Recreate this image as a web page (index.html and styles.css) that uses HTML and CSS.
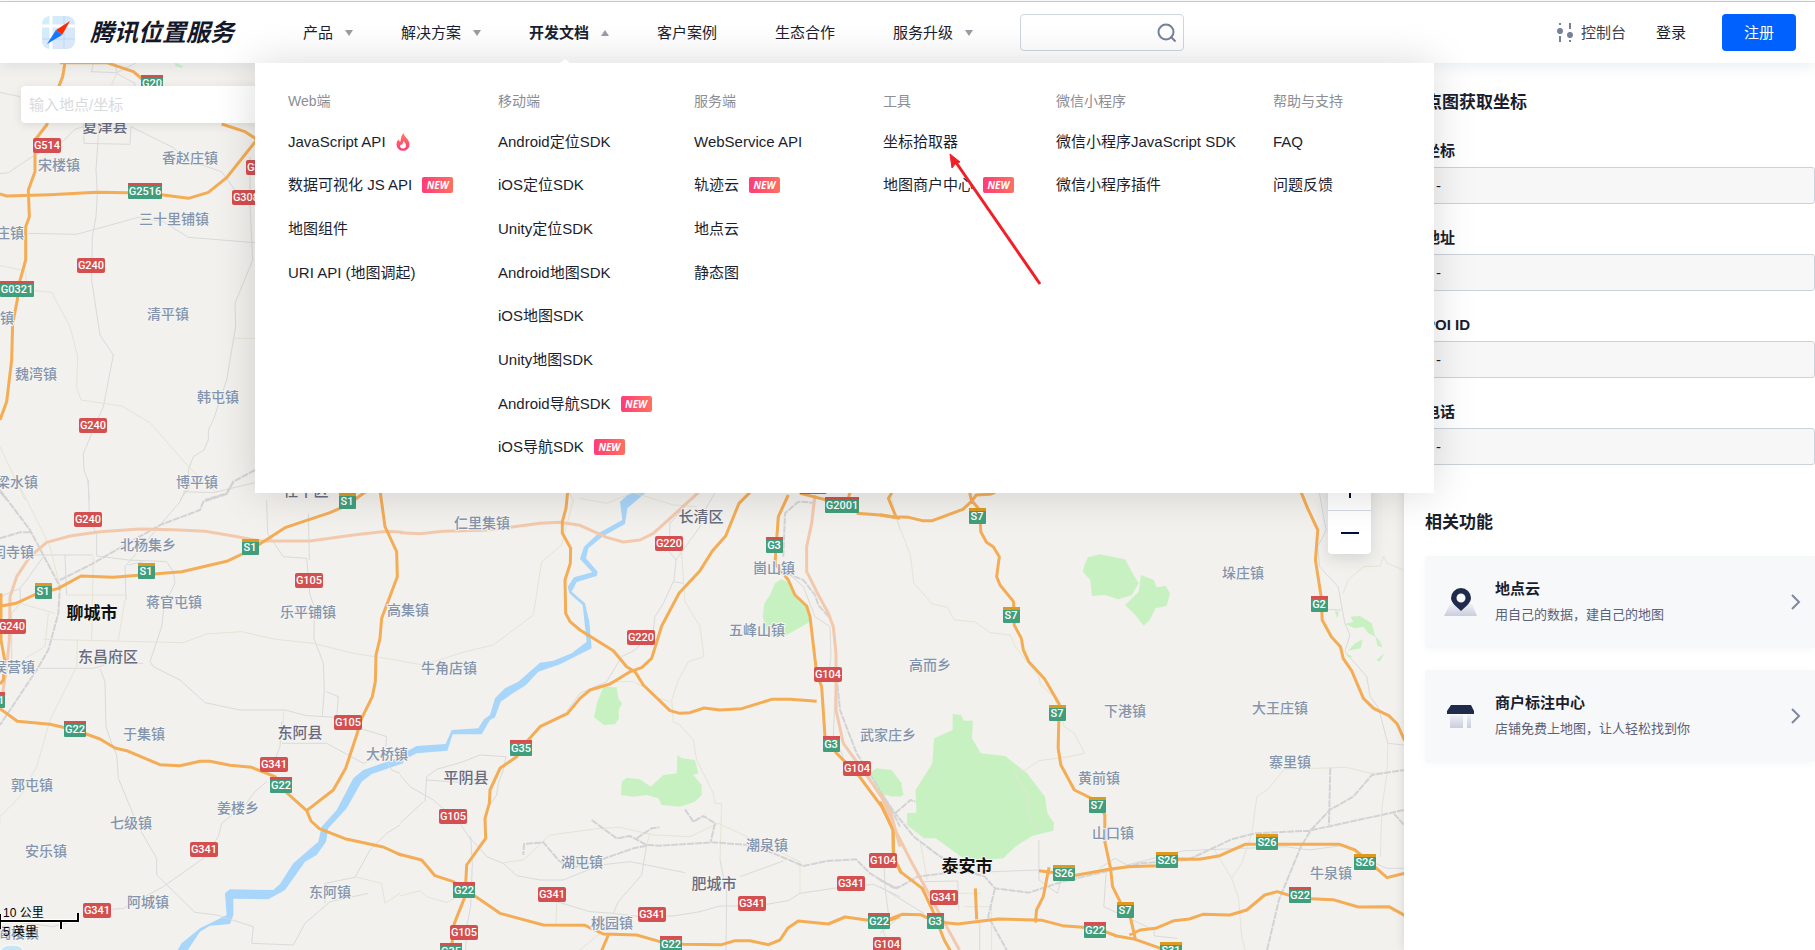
FILE: index.html
```html
<!DOCTYPE html>
<html lang="zh-CN">
<head>
<meta charset="utf-8">
<title>腾讯位置服务 - 坐标拾取器</title>
<link rel="stylesheet" href="styles.css">
</head>
<body>
<header class="header">
  <a class="brand" href="#">
    <svg class="brand-mark" width="33" height="33" viewBox="0 0 33 33">
      <defs>
        <clipPath id="tile"><rect width="33" height="33" rx="8"/></clipPath>
        <linearGradient id="tileFill" x2="1" y2="1"><stop offset="0" stop-color="#d3eef9"/><stop offset="1" stop-color="#dbe4f9"/></linearGradient>
      </defs>
      <g clip-path="url(#tile)">
        <rect width="33" height="33" fill="url(#tileFill)"/>
        <path d="M9 0V33M0 10H33" stroke="#fff" stroke-width="3"/>
        <path d="M22 0V33M0 23H33" stroke="#b9daf2" stroke-width="1"/>
      </g>
      <path d="M28 5 14 14 20 19Z" fill="#ff2a00"/>
      <path d="M5 28 14 14 20 19Z" fill="#1677ff"/>
    </svg>
    <span class="brand-name">腾讯位置服务</span>
  </a>
  <nav class="nav">
    <a class="nav-item has-menu" href="#">产品</a>
    <a class="nav-item has-menu" href="#">解决方案</a>
    <a class="nav-item has-menu is-open" href="#">开发文档</a>
    <a class="nav-item" href="#">客户案例</a>
    <a class="nav-item" href="#">生态合作</a>
    <a class="nav-item has-menu" href="#">服务升级</a>
  </nav>
  <form class="site-search">
    <input type="search" aria-label="搜索">
    <button type="button" aria-label="搜索">
      <svg width="20" height="20" viewBox="0 0 20 20" fill="none" stroke="#76819a" stroke-width="2"><circle cx="9" cy="9" r="7.5"/><path d="M13.5 13.500 18.500 18.500"/></svg>
    </button>
  </form>
  <div class="account">
    <a class="console" href="#">
      <svg width="16" height="20" viewBox="0 0 16 20" fill="#76819a" stroke="#76819a" stroke-width="2"><path d="M3 0V2M3 5V11M3 13V19M13 0V6M13 9V15M13 17V19"/><circle cx="3" cy="8" r="2"/><circle cx="13" cy="12" r="2"/></svg>
      控制台</a>
    <a class="login" href="#">登录</a>
    <button class="register" type="button">注册</button>
  </div>

  <div class="mega">
    <section><h3>Web端</h3>
      <ul>
        <li><a href="#">JavaScript API</a>
          <svg width="14" height="18" viewBox="0 0 14 18"><defs><linearGradient id="fire" x2="0" y2="1"><stop offset="0" stop-color="#ff7a5c"/><stop offset="1" stop-color="#ff3c78"/></linearGradient></defs><path d="M7.500 0C8 4 13.500 6 13.500 11.500A6.500 6.300 0 0 1 .5 11.500C.5 9 1.500 7.500 2.500 6.500C3 8 3.500 8.500 4.500 8.500C5 5 5 3 7.500 0Z" fill="url(#fire)"/><path d="M7.500 8C8.500 9.500 10 10.500 10 12.500A3 3 0 0 1 4 12.500C4.500 11.500 5.500 11.800 6 11.500C7 10.500 7 9.500 7.500 8Z" fill="#fff"/></svg></li>
        <li><a href="#">数据可视化 JS API</a><em class="new">NEW</em></li>
        <li><a href="#">地图组件</a></li>
        <li><a href="#">URI API (地图调起)</a></li>
      </ul></section>
    <section><h3>移动端</h3>
      <ul>
        <li><a href="#">Android定位SDK</a></li>
        <li><a href="#">iOS定位SDK</a></li>
        <li><a href="#">Unity定位SDK</a></li>
        <li><a href="#">Android地图SDK</a></li>
        <li><a href="#">iOS地图SDK</a></li>
        <li><a href="#">Unity地图SDK</a></li>
        <li><a href="#">Android导航SDK</a><em class="new">NEW</em></li>
        <li><a href="#">iOS导航SDK</a><em class="new">NEW</em></li>
      </ul></section>
    <section><h3>服务端</h3>
      <ul>
        <li><a href="#">WebService API</a></li>
        <li><a href="#">轨迹云</a><em class="new">NEW</em></li>
        <li><a href="#">地点云</a></li>
        <li><a href="#">静态图</a></li>
      </ul></section>
    <section><h3>工具</h3>
      <ul>
        <li><a href="#">坐标拾取器</a></li>
        <li><a href="#">地图商户中心</a><em class="new">NEW</em></li>
      </ul></section>
    <section><h3>微信小程序</h3>
      <ul>
        <li><a href="#">微信小程序JavaScript SDK</a></li>
        <li><a href="#">微信小程序插件</a></li>
      </ul></section>
    <section><h3>帮助与支持</h3>
      <ul>
        <li><a href="#">FAQ</a></li>
        <li><a href="#">问题反馈</a></li>
      </ul></section>
    <svg class="callout" width="100" height="140" viewBox="0 0 100 140"><path d="M94 133 9 10" stroke="#f01f28" stroke-width="3"/><path d="M4 3 14 11 10 12 6 17Z" fill="#f01f28" stroke="#f01f28"/></svg>
  </div>
</header>

<main class="main">
  <section class="map">
    <svg class="canvas" role="img" aria-label="地图">
      <defs>
        <g id="r4"><rect x="-14" y="-7" width="28" height="15" rx="2" fill="#d44f4f"/></g>
        <g id="g3"><rect x="-11" y="-7" width="22" height="15" rx="1" fill="#419e7c"/><rect x="-11" y="-8" width="22" height="3" fill="#d44f4f"/></g>
        <g id="g2"><rect x="-8" y="-7" width="17" height="15" rx="1" fill="#419e7c"/><rect x="-8" y="-8" width="17" height="3" fill="#d44f4f"/></g>
        <g id="g5"><rect x="-17" y="-7" width="34" height="15" rx="1" fill="#419e7c"/><rect x="-17" y="-8" width="34" height="3" fill="#d44f4f"/></g>
        <g id="s2"><rect x="-8" y="-7" width="17" height="15" rx="1" fill="#419e7c"/><rect x="-8" y="-8" width="17" height="3" fill="#dd9a20"/></g>
        <g id="s3"><rect x="-11" y="-7" width="22" height="15" rx="1" fill="#419e7c"/><rect x="-11" y="-8" width="22" height="3" fill="#dd9a20"/></g>
      </defs>
      <g transform="translate(0 -63)">
        <!-- north-west sheet -->
        <g transform="translate(0 60) scale(.33333)">
          <path class="park" d="M525 8 548 18 545 24 526 18Z"/>
          <path class="lane" d="M0 97 60 110M0 341 25 338 100 288 190 243 225 208 250 200M272 35 345 38 405 70 403 100M275 35 280 8M350 38 345 8M350 38 410 8M250 190 252 250 390 253 393 200 520 263 560 300 665 335 705 390M85 520 230 523 415 472 490 485 565 532 765 548M297 195 288 330 292 400 288 470 277 530 275 660 300 825 340 885 310 1040 250 1180 252 1230 263 1260 268 1320M750 290 750 430 758 600 705 730 707 800 680 960 640 1080 625 1110 625 1140 612 1170 580 1190 565 1230 570 1280 540 1320M550 1295 640 1298 765 1268"/>
          <path class="path" d="M350 38 335 75M0 617 75 632 83 690 155 697 210 800 233 890 230 980 243 1020 365 1038 450 1088 570 1225 650 1298M700 835H765M0 1160 75 1320"/>
          <path class="rail" d="M765 1230 700 1265 680 1300 615 1320M0 1295 20 1320"/>
          <path class="road" d="M195 8 188 50 177 78 140 195 105 240 105 335 85 390 88 470 77 500 77 600 55 680 52 720 38 790 35 900 20 1025 0 1080M180 8H320L400 35 430 60M0 402 20 408 150 404 290 397 385 398 490 405 565 415 625 397 680 353 770 240M665 192 735 215 770 238"/>
        </g>
        <!-- south-west sheet -->
        <g transform="translate(0 480) scale(.33333)">
          <path class="water" d="M530 1415 545 1390 600 1345 655 1318 680 1305 675 1240 690 1228 820 1230 840 1212 880 1150 955 1085 965 1040 1010 990 1060 895 1090 870 1210 828V850L1115 882 1085 905 1040 985 985 1045 978 1085 950 1125 915 1145 855 1230 805 1258 700 1256 700 1305 690 1332 630 1337 600 1355 560 1415Z"/>
          <path class="lane" d="M265 0 268 110 290 165 290 228 385 240 500 245 520 275 525 310 510 340 495 360 485 440 450 545 460 560 540 600 615 668 720 690 855 690 920 707 1010 712 1015 650 980 635M80 225H278M195 225 200 345M0 350 60 325 80 300 130 230M60 325 62 370 35 400 35 545M120 565H280L330 550 430 550M300 565 315 605 318 740 335 790 350 825 355 895 415 1040 470 1135 470 1185 585 1297 650 1305 760 1340 755 1390 880 1395 915 1330 990 1265 1105 1240M570 0 540 65 375 260 378 360M430 245 385 255M800 60 803 160 850 230 920 235 930 345 943 380 942 475 970 550 973 630 967 707M925 100 928 240M845 790 980 790 1090 850 1155 820 1160 770 1080 745M800 905 765 935 735 975 665 1030 655 1070 610 1135 490 1220 370 1285 335 1288M845 725 840 800 820 850M0 1320 160 1340 230 1320M975 1270 975 1210 1065 1192 1110 1110 1160 1060 1200 1035M1145 815 1175 870 1200 880"/>
          <path class="path" d="M60 20 150 200 180 320M200 345H380M375 360 355 480M280 230 275 480M60 370 165 400M145 400 135 500 75 535M130 478 550 488 620 462 725 455 820 477 940 490 1060 520 1200 542M232 480 230 560 150 720 110 860 60 950 0 1010V1030M850 690 850 750M1065 1190 1145 1210 1155 1270 1200 1240"/>
          <path class="rail" d="M0 30 90 150 180 320 175 400 145 510 110 570 30 690 0 735M180 300 270 255 480 135 600 90 610 65 680 42 700 5M0 175 60 157 95 157"/>
          <path class="pink" d="M8 640 20 560 28 480 30 350 50 290 90 230 140 187 210 168 300 155 420 147 520 149 615 154 700 168 780 183 930 183 1060 165 1160 154 1210 157"/>
          <path class="road" d="M0 379 48 370 102 345 175 325 243 288 340 292 415 286 545 275 680 244 752 210 855 143 990 98 1040 76 1095 37 1140 5M3 340V480L14 540 10 600 0 612M0 686 52 724 150 733 225 750 300 777 345 804 380 812 480 854 540 857 600 844 630 844 690 856 755 862 825 890 860 938 920 992 933 1023 958 1046 1035 1076 1150 1101 1205 1126M1140 30 1155 140 1190 215 1192 290 1145 415 1140 475 1128 525 1126 605 1117 650 1085 715 1070 765 1037 865 1000 930 920 992"/>
        </g>
        <!-- south-centre sheet -->
        <g transform="translate(400 480) scale(.33333)">
          <path class="park" d="M1145 297 1168 310 1190 350 1225 385 1230 425 1160 465 1130 475 1105 465 1088 410 1093 370 1110 345 1125 310ZM610 620 650 622 655 655 666 670 656 690 657 715 645 733 612 735 582 712 592 665ZM665 905 680 893 720 898 752 920 790 885 830 880 832 825 845 835 885 840 895 880 880 885 905 915 905 945 885 965 840 980 785 975 775 955 740 945 700 950 663 945ZM1408 880 1430 865 1475 870 1505 910V950L1455 945 1435 935Z"/>
          <path class="water" d="M700 30 660 65 667 120 595 160 552 200 540 237 577 277 522 292 503 320 508 340 548 375 560 485 515 520 460 542 420 548 395 570 355 605 315 625 285 655 270 705 252 718 235 745 155 750 137 792 50 798 -5 828V848L50 820 142 812 158 763 245 763 270 720 285 712 302 665 335 642 378 615 415 575 480 553 575 505 568 425 555 370 515 335 530 306 590 288 593 275 558 235 565 205 610 168 675 132 682 85 740 35Z"/>
          <path class="lane" d="M945 38 915 90 900 140 828 240 822 300 790 370 765 410 760 450 705 510 665 530 620 605 540 640 500 695M810 125 808 215 828 240M890 38 810 130M820 305 850 310M75 965 80 890 110 868 190 845 240 825 318 830 310 870 295 910 290 945 270 975M70 965 0 1030M80 900 250 912M0 885 30 920 100 960 180 1030 210 1075 240 1105 260 1130 310 1150 350 1187 420 1200 490 1200 600 1155 690 1145 855 1178M212 1070 217 1150 212 1280 200 1340 197 1410M470 1265 570 1295 640 1300 720 1310 820 1308 900 1295 960 1278 1015 1278 1100 1273 1165 1262 1200 1240 1300 1225 1420 1213 1500 1250M640 1300 655 1265 725 1185 740 1095M960 1140 980 1240 978 1410M1020 1190 1150 1143M1165 280 1210 320 1245 410 1290 440 1293 530 1285 590M1305 650 1300 770 1330 830M1452 1150 1455 1220 1465 1300 1445 1340 1460 1380"/>
          <path class="path" d="M485 0 520 60 485 195 425 245 400 405 280 495 195 515 70 555 0 543M540 55 620 70 700 38 820 75 890 80M842 180 855 365 900 440 912 530 865 545 835 600 815 660 820 725 840 735 880 780 890 840 940 940 945 970 965 970 960 1140M630 605H700L730 620M780 655 810 665M310 1148 370 1140 450 1065 600 1045 660 1042 760 1065 870 1070 955 1030 1200 1145V1240M740 1095 750 1060M0 1248 60 1232 80 1250 140 1268 190 1240M600 1360 540 1410M470 1260 468 1330M1470 38 1500 150"/>
          <path class="rail" d="M575 1020 650 1075 690 1068 740 1095 780 1097 935 1087 1050 1095 1120 1120 1210 1158 1280 1143 1368 1138 1410 1180 1480 1223 1500 1220M710 1075 755 1045 778 1042M855 988 880 1025 910 1008 945 1030 932 1085M740 1097 700 1105 600 1140 510 1165 475 1140 430 1087 372 1092 370 1125M1150 230 1155 100 1195 65 1240 68M1160 280 1210 300 1245 345 1255 375 1290 415M1310 590 1320 690 1370 820 1440 930 1480 1000 1500 1040"/>
          <path class="pink" d="M0 158 60 161 130 154 250 151 330 142 420 130 480 127 540 136 620 172 670 186 720 180 760 160 810 115 895 38M1245 45 1235 130 1220 200 1220 275 1250 335 1285 400 1300 440 1308 520 1308 690 1330 790 1410 900 1470 990 1500 1100"/>
          <path class="road" d="M503 35 498 85 487 125 487 160 512 205 511 250 495 300 497 400 510 425 540 450 640 512 680 560 705 575 730 615 810 692 840 700 870 698 912 684 960 690 1025 686 1115 658 1170 658 1250 664M1050 37 1017 70 977 168 937 213 900 272 837 340 785 438 755 535 725 563 690 575 630 612 570 630 540 655 503 700 420 740 380 785 350 830 300 865 270 930 268 970 255 1015 257 1075 200 1155 195 1250 163 1330 155 1400M-5 1122 65 1140 105 1187 160 1205 230 1252 300 1300 430 1335 555 1336 610 1362 710 1365 780 1385 850 1393 965 1394 1005 1382 1050 1382 1105 1394 1140 1380 1163 1345 1195 1323 1285 1332 1335 1311 1400 1320 1470 1320 1500 1310M625 1365 605 1412M1165 45 1135 110 1125 250 1165 300 1185 345 1220 378 1230 410 1250 580 1265 620 1275 770 1310 820 1375 885 1445 980 1480 1050 1480 1130 1505 1180M1200 40 1240 50 1280 60M1370 100 1440 105 1500 115M1350 38 1345 55"/>
        </g>
        <!-- south-east sheet -->
        <g transform="translate(880 480) scale(.33806 .33333)">
          <path class="park" d="M215 702 240 705 248 722 275 722 272 775 298 820 370 828 435 880 488 950 495 1000 515 1030 513 1052 450 1068 400 1100 365 1135 300 1140 240 1130 165 1075 130 1075 80 1035V1000L108 998 105 930 155 850 160 775 215 750ZM0 868 30 875 60 905 70 945 35 950 0 935ZM605 255 615 232 650 223 725 238 745 275 765 310 745 345 705 358 665 345 627 348 622 300 600 275ZM772 285 810 300 818 322 845 318 858 340 848 378 815 385 798 420 780 437 755 405 725 375 765 335ZM1345 392 1358 395 1352 415ZM1392 410 1420 408 1455 430 1465 470 1445 460 1430 440 1405 445 1375 432 1400 425ZM1405 490 1428 478 1422 505 1385 512ZM1465 468 1480 485 1486 502 1472 498ZM1378 520 1398 530 1385 532ZM1468 540 1492 520 1478 545Z"/>
          <path class="lane" d="M1300 38 1312 110 1320 150 1295 200 1300 260 1355 320 1375 430 1390 465 1375 515 1440 590 1450 650 1475 685 1502 790 1550 795M1310 388 1365 390M200 1180 470 1170M130 1205 230 1203 233 1290M670 1165 662 1280 810 1350 812 1368 880 1375M650 1165 695 1135 730 1155 900 1112 1200 1100 1270 1110 1380 1095M1440 1140 1500 1165H1550M0 1220 130 1300M295 1330V1410M0 1360 60 1310M470 1080V1200L525 1240 535 1200"/>
          <path class="path" d="M50 120 90 225 100 310 155 372 200 382 220 420 280 425 325 458 385 465 400 500 470 590 475 615 515 650 545 740 575 760 605 820 560 830 470 842 430 870 395 875 440 950 435 1000 470 1055M1370 340 1385 300 1430 260 1480 258 1490 228 1500 250 1550 270M1502 790 1500 880 1485 980 1480 1130M1100 1060 1115 950 1150 925 1195 868 1380 862 1450 880 1500 878M1100 1060 1070 1150 1040 1195 990 1110M1040 1195 1060 1250 1070 1370 1080 1410M120 1090 140 1200M130 1240 300 1240M250 1280H330V1410"/>
          <path class="rail" d="M0 935 45 1000 100 1070 165 1120 230 1165 310 1190 340 1225 440 1238 540 1205 770 1150 910 1140 1040 1078 1110 1060 1270 1052 1550 990M340 1225 320 1310 375 1410M45 1000 90 960 105 965M0 1200 50 1225 110 1190 230 1175M1145 1410 1180 1260 1245 1100 1275 1050 1330 990 1400 950 1455 885 1550 870M1332 865 1328 1035M1520 1000 1550 1035"/>
          <path class="pink" d="M0 935 40 1040 90 1140 170 1290 235 1410"/>
          <path class="road" d="M35 38 25 55 47 110 85 112 125 122 155 122 245 88 270 65 285 45 325 43 340 37M0 104 47 112M265 35 270 60 295 90 298 155 315 187 335 200 353 230 345 290 355 315 395 365 397 435 418 475 424 510 440 545 487 597 530 672 527 805 535 855 575 930 645 965 665 1005 665 1085 682 1165 688 1220 715 1275 740 1310 755 1375M1245 35 1265 85 1295 150 1288 240 1305 350 1308 420 1335 470 1362 500 1370 535 1395 572 1430 655 1460 685 1505 707 1530 732 1552 782M470 1172 580 1186 682 1167 735 1160 820 1157 880 1137 945 1138 1005 1127 1080 1093 1360 1093 1405 1110 1440 1140 1500 1193 1550 1180M500 1162 483 1250 463 1290 460 1328M0 965 38 1050 40 1130 60 1175 125 1225 155 1290 190 1380 208 1412M0 1328 65 1303 120 1304 165 1325 230 1332 350 1317 480 1321 540 1337 640 1345 700 1368 755 1378 830 1405M738 1365 770 1350 815 1345 870 1322 915 1317 955 1303 1035 1305 1085 1290 1138 1245 1175 1235 1240 1255 1340 1259 1415 1281 1505 1280 1552 1306M282 1225 286 1318"/>
        </g>

        <g class="town">
          <text x="59" y="170">宋楼镇</text><text x="190" y="163">香赵庄镇</text><text x="174" y="224">三十里铺镇</text>
          <text x="10" y="238">庄镇</text><text x="7" y="323">镇</text><text x="168" y="319">清平镇</text><text x="36" y="379">魏湾镇</text>
          <text x="218" y="402">韩屯镇</text><text x="17" y="487">梁水镇</text><text x="197" y="487">博平镇</text><text x="148" y="550">北杨集乡</text>
          <text x="13" y="557">闫寺镇</text><text x="174" y="607">蒋官屯镇</text><text x="308" y="617">乐平铺镇</text><text x="408" y="615">高集镇</text>
          <text x="14" y="672">侯营镇</text><text x="144" y="739">于集镇</text><text x="387" y="759">大桥镇</text><text x="32" y="790">郭屯镇</text>
          <text x="131" y="828">七级镇</text><text x="238" y="813">姜楼乡</text><text x="46" y="856">安乐镇</text><text x="148" y="907">阿城镇</text>
          <text x="330" y="897">东阿镇</text><text x="18" y="938">阎楼镇</text><text x="482" y="528">仁里集镇</text><text x="774" y="573">崮山镇</text>
          <text x="757" y="635">五峰山镇</text><text x="449" y="673">牛角店镇</text><text x="582" y="867">湖屯镇</text><text x="767" y="850">潮泉镇</text>
          <text x="612" y="928">桃园镇</text><text x="888" y="740">武家庄乡</text><text x="930" y="670">高而乡</text><text x="1125" y="716">下港镇</text>
          <text x="1099" y="783">黄前镇</text><text x="1113" y="838">山口镇</text><text x="1243" y="578">垛庄镇</text><text x="1280" y="713">大王庄镇</text>
          <text x="1290" y="767">寨里镇</text><text x="1331" y="878">牛泉镇</text>
        </g>
        <g class="county">
          <text x="105" y="132">夏津县</text><text x="306" y="496">茌平区</text><text x="108" y="662">东昌府区</text><text x="300" y="738">东阿县</text>
          <text x="466" y="783">平阴县</text><text x="701" y="522">长清区</text><text x="714" y="889">肥城市</text>
        </g>
        <g class="city"><text x="92" y="619">聊城市</text><text x="967" y="872">泰安市</text></g>

        <g class="shield">
          <use href="#g3" x="152" y="83"/><text x="152" y="87">G20</text>
          <use href="#r4" x="47" y="145"/><text x="47" y="149">G514</text>
          <use href="#g5" x="145" y="191"/><text x="145" y="195">G2516</text>
          <use href="#r4" x="260" y="167"/><text x="260" y="171">G308</text>
          <use href="#r4" x="246" y="197"/><text x="246" y="201">G308</text>
          <use href="#r4" x="91" y="265"/><text x="91" y="269">G240</text>
          <use href="#g5" x="17" y="289"/><text x="17" y="293">G0321</text>
          <use href="#r4" x="93" y="425"/><text x="93" y="429">G240</text>
          <use href="#s2" x="347" y="501"/><text x="347" y="505">S1</text>
          <use href="#s2" x="250" y="547"/><text x="250" y="551">S1</text>
          <use href="#r4" x="88" y="519"/><text x="88" y="523">G240</text>
          <use href="#s2" x="146" y="571"/><text x="146" y="575">S1</text>
          <use href="#s2" x="43" y="591"/><text x="43" y="595">S1</text>
          <use href="#r4" x="309" y="580"/><text x="309" y="584">G105</text>
          <use href="#r4" x="12" y="626"/><text x="12" y="630">G240</text>
          <use href="#g5" x="-12" y="700"/><text x="-12" y="704">G0321</text>
          <use href="#g3" x="75" y="729"/><text x="75" y="733">G22</text>
          <use href="#r4" x="348" y="722"/><text x="348" y="726">G105</text>
          <use href="#r4" x="274" y="764"/><text x="274" y="768">G341</text>
          <use href="#g3" x="281" y="785"/><text x="281" y="789">G22</text>
          <use href="#r4" x="204" y="849"/><text x="204" y="853">G341</text>
          <use href="#r4" x="97" y="910"/><text x="97" y="914">G341</text>
          <use href="#g3" x="521" y="748"/><text x="521" y="752">G35</text>
          <use href="#r4" x="453" y="816"/><text x="453" y="820">G105</text>
          <use href="#g3" x="464" y="890"/><text x="464" y="894">G22</text>
          <use href="#r4" x="464" y="932"/><text x="464" y="936">G105</text>
          <use href="#g3" x="451" y="951"/><text x="451" y="955">G35</text>
          <use href="#r4" x="552" y="894"/><text x="552" y="898">G341</text>
          <use href="#r4" x="652" y="914"/><text x="652" y="918">G341</text>
          <use href="#r4" x="752" y="903"/><text x="752" y="907">G341</text>
          <use href="#r4" x="851" y="883"/><text x="851" y="887">G341</text>
          <use href="#g3" x="671" y="944"/><text x="671" y="948">G22</text>
          <use href="#r4" x="669" y="543"/><text x="669" y="547">G220</text>
          <use href="#r4" x="641" y="637"/><text x="641" y="641">G220</text>
          <use href="#g2" x="774" y="545"/><text x="774" y="549">G3</text>
          <use href="#r4" x="813" y="486"/><text x="813" y="490">G104</text>
          <use href="#g5" x="842" y="505"/><text x="842" y="509">G2001</text>
          <use href="#s2" x="977" y="516"/><text x="977" y="520">S7</text>
          <use href="#s2" x="1011" y="615"/><text x="1011" y="619">S7</text>
          <use href="#s2" x="1057" y="713"/><text x="1057" y="717">S7</text>
          <use href="#s2" x="1097" y="805"/><text x="1097" y="809">S7</text>
          <use href="#s2" x="1125" y="910"/><text x="1125" y="914">S7</text>
          <use href="#r4" x="828" y="674"/><text x="828" y="678">G104</text>
          <use href="#g2" x="831" y="744"/><text x="831" y="748">G3</text>
          <use href="#r4" x="857" y="768"/><text x="857" y="772">G104</text>
          <use href="#r4" x="883" y="860"/><text x="883" y="864">G104</text>
          <use href="#r4" x="887" y="944"/><text x="887" y="948">G104</text>
          <use href="#r4" x="944" y="897"/><text x="944" y="901">G341</text>
          <use href="#g2" x="935" y="921"/><text x="935" y="925">G3</text>
          <use href="#g3" x="879" y="921"/><text x="879" y="925">G22</text>
          <use href="#s3" x="1064" y="873"/><text x="1064" y="877">S26</text>
          <use href="#s3" x="1167" y="860"/><text x="1167" y="864">S26</text>
          <use href="#s3" x="1267" y="842"/><text x="1267" y="846">S26</text>
          <use href="#s3" x="1365" y="862"/><text x="1365" y="866">S26</text>
          <use href="#g3" x="1300" y="895"/><text x="1300" y="899">G22</text>
          <use href="#g3" x="1095" y="930"/><text x="1095" y="934">G22</text>
          <use href="#s3" x="1171" y="950"/><text x="1171" y="954">S31</text>
          <use href="#g2" x="1319" y="604"/><text x="1319" y="608">G2</text>
        </g>

        <ellipse cx="12" cy="950" rx="11" ry="5" fill="#c4e6f5" stroke="#fff"/>
        <g class="scale">
          <path d="M0 921H78M78 913V922M61 921V929M0 914V929" fill="none" stroke="#fff" stroke-width="4"/>
          <path d="M0 921H79M78 913V922M61 921V929M0 914V929" fill="none" stroke="#000" stroke-width="2"/>
          <text x="3" y="917">10 公里</text><text x="3" y="936">5 英里</text>
        </g>
      </g>
    </svg>
    <input class="map-search" type="text" aria-label="输入地点/坐标" placeholder="输入地点/坐标">
    <div class="zoom">
      <button type="button" aria-label="放大"><svg width="18" height="18" stroke="#00103a" stroke-width="2"><path d="M0 9H18M9 0V18"/></svg></button>
      <button type="button" aria-label="缩小"><svg width="18" height="18" stroke="#00103a" stroke-width="2"><path d="M0 9H18"/></svg></button>
    </div>
  </section>

  <aside class="panel">
    <h2>点图获取坐标</h2>
    <div class="field"><label for="coord">坐标</label><input id="coord" type="text" value="-" readonly></div>
    <div class="field"><label for="address">地址</label><input id="address" type="text" value="-" readonly></div>
    <div class="field"><label for="poi">POI ID</label><input id="poi" type="text" value="-" readonly></div>
    <div class="field"><label for="phone">电话</label><input id="phone" type="text" value="-" readonly></div>
    <h2 class="related">相关功能</h2>
    <a class="card" href="#">
      <svg width="34" height="30" viewBox="0 0 34 30"><defs><linearGradient id="soft" x2="0" y2="1"><stop offset="0" stop-color="#eef0f5"/><stop offset="1" stop-color="#c9cddd"/></linearGradient></defs><path d="M6 17H28L33 29H0Z" fill="url(#soft)"/><path fill-rule="evenodd" d="M17 1A10 10 0 0 1 27 11C27 16 21 20 17 24C13 20 7 16 7 11A10 10 0 0 1 17 1ZM17 6.500A4.500 4.500 0 1 0 17 15.500A4.500 4.500 0 1 0 17 6.500Z" fill="#202b4c"/></svg>
      <span class="card-text"><strong>地点云</strong><small>用自己的数据，建自己的地图</small></span>
      <svg class="chevron" width="10" height="16" viewBox="0 0 10 16"><path d="M1 1 8 8 1 15"/></svg>
    </a>
    <a class="card" href="#">
      <svg width="34" height="30" viewBox="0 0 34 30"><path d="M6 14H19V27H6ZM23 14H27V27H23Z" fill="url(#soft)"/><path d="M7 4H27L30 10V13H3V10Z" fill="#202b4c"/></svg>
      <span class="card-text"><strong>商户标注中心</strong><small>店铺免费上地图，让人轻松找到你</small></span>
      <svg class="chevron" width="10" height="16" viewBox="0 0 10 16"><path d="M1 1 8 8 1 15"/></svg>
    </a>
  </aside>
</main>
</body>
</html>
```
FILE: styles.css
```css
* { box-sizing: border-box; }

body {
  margin: 0;
  height: 100vh;
  display: flex;
  flex-direction: column;
  overflow: hidden;
  padding-top: 1px;
  background: #fff;
  color: #1a1e2e;
  font: 15px/20px "Liberation Sans", "Noto Sans CJK SC", sans-serif;
}

a { color: inherit; text-decoration: none; }
button, input { font: inherit; color: inherit; }
h2, h3, ul { margin: 0; padding: 0; }
ul { list-style: none; }

/* Header */
.header {
  position: relative;
  z-index: 2;
  flex: none;
  display: flex;
  align-items: center;
  height: 62px;
  padding: 0 19px 0 42px;
  border-top: 1px solid #c8cac9;
  background: #fff;
  box-shadow: 0 2px 14px rgba(60, 80, 120, .12);
}

.brand { display: flex; align-items: center; gap: 15px; width: 261px; }
.brand-name { color: #14182b; font-size: 24px; line-height: 32px; font-weight: 700; font-style: italic; white-space: nowrap; }

.nav { display: flex; gap: 48px; }
.nav-item { padding-right: 10px; white-space: nowrap; }
.has-menu { display: flex; align-items: center; gap: 12px; padding-right: 0; }
.has-menu::after { content: ""; border: 4px solid transparent; border-top: 6px solid #9a9ca6; border-bottom: 0; }
.is-open { font-weight: 700; }
.is-open::after { border-top: 0; border-bottom: 6px solid #9a9ca6; }

.site-search {
  display: flex;
  align-items: center;
  width: 164px;
  height: 37px;
  margin-left: 47px;
  border: 1px solid #d0d6de;
  border-radius: 4px;
}
.site-search input { flex: 1; min-width: 0; border: 0; background: none; outline: 0; }
.site-search button { display: flex; padding: 0 6px; border: 0; background: none; }

.account { display: flex; align-items: center; margin-left: auto; }
.console { display: flex; align-items: center; gap: 8px; color: #3c404c; }
.login { margin: 0 36px 0 30px; }
.register { width: 74px; height: 37px; border: 0; border-radius: 4px; background: #0061ff; color: #fff; }

/* Documentation menu */
.mega {
  position: absolute;
  top: 61px;
  left: 255px;
  display: grid;
  grid-template-columns: 210px 196px 189px 173px 217px auto;
  width: 1179px;
  padding: 28px 33px 24px;
  background: #fff;
  box-shadow: 0 0 40px rgba(0, 0, 0, .15);
}
.mega::before {
  content: "";
  position: absolute;
  top: -4px;
  left: 305px;
  border: 5px solid transparent;
  border-top: 0;
  border-bottom: 4px solid #fff;
}
.mega h3 { color: #8c8e96; font-size: 14px; font-weight: 400; }
.mega ul { display: grid; grid-template-rows: repeat(8, 1fr); height: 349px; margin-top: 9px; }
.mega li { display: flex; align-items: center; gap: 10px; white-space: nowrap; }
.new {
  width: 31px;
  border-radius: 2px;
  background: linear-gradient(90deg, #ff3c78, #ff7060);
  color: #fff;
  font: italic 700 10px/16px "Open Sans", "Liberation Sans", sans-serif;
  text-align: center;
}
.callout { position: absolute; top: 88px; left: 691px; }

/* Map */
.main { flex: 1; min-height: 0; display: flex; }
.map { position: relative; flex: 1; min-width: 0; overflow: hidden; background: #f2f1ed; }
.canvas { display: block; width: 100%; height: 100%; }
.canvas path { vector-effect: non-scaling-stroke; stroke-linejoin: round; }
.park { fill: #c8f1c2; }
.water { fill: #a8d5fa; }
.lane, .path, .rail, .pink, .road { fill: none; }
.lane { stroke: #d9dada; stroke-width: 1px; }
.path { stroke: #e5e4d6; stroke-width: 1px; }
.rail { stroke: #d2d3d5; stroke-width: 2px; stroke-dasharray: 7px 1px; }
.pink { stroke: #f3c9ad; stroke-width: 3px; }
.road { stroke: #f4ac55; stroke-width: 3px; }
.town, .county, .city { font-family: "Noto Sans CJK SC", sans-serif; font-weight: 500; text-anchor: middle; paint-order: stroke; stroke: #f4f4f1; stroke-width: 2px; }
.town { font-size: 14px; fill: #8494ad; }
.county { font-size: 15px; fill: #696b7e; }
.city { font-size: 17px; font-weight: 700; fill: #111; }
.shield text { fill: #fff; font: 500 11px Roboto, "Liberation Sans", sans-serif; text-anchor: middle; }
.scale text { font: 12px "Liberation Sans", "Noto Sans CJK SC", sans-serif; }

.map-search {
  position: absolute;
  top: 23px;
  left: 21px;
  width: 320px;
  height: 37px;
  padding: 0 8px;
  border: 0;
  border-radius: 4px;
  background: #fff;
  box-shadow: 0 2px 10px rgba(0, 0, 0, .1);
}
.map-search::placeholder { color: #d9dadc; }

.zoom { position: absolute; top: 404px; right: 33px; width: 43px; border-radius: 4px; background: #fff; box-shadow: 0 4px 16px rgba(40, 50, 80, .15); }
.zoom button { display: flex; align-items: center; justify-content: center; width: 100%; height: 43px; padding: 0; border: 0; background: none; }
.zoom button + button { height: 44px; border-top: 1px solid #d3d8e3; }

/* Side panel */
.panel { z-index: 1; flex: none; width: 411px; padding: 28px 0 0 21px; background: #fff; box-shadow: 0 0 10px rgba(0, 0, 0, .12); }
.panel h2 { font-size: 17px; line-height: 24px; font-weight: 700; }
.field { display: flex; flex-direction: column; margin-top: 26px; }
.field + .field { margin-top: 24px; }
.field label { margin-bottom: 6px; font-weight: 700; }
.field input { height: 37px; padding: 0 10px; border: 1px solid #cdd2da; border-radius: 3px; background: #f7f7f7; }
.panel .related { margin: 46px 0 21px; }
.card {
  display: flex;
  align-items: center;
  gap: 17px;
  height: 92px;
  margin-bottom: 22px;
  padding: 0 14px 0 19px;
  border-radius: 4px 0 0 4px;
  background: #f7f8fa;
  box-shadow: 0 2px 6px rgba(120, 130, 160, .06);
}
.card-text { display: flex; flex: 1; flex-direction: column; gap: 6px; }
.card-text small { color: #5a6178; font-size: 13px; }
.chevron { fill: none; stroke: #8088a0; stroke-width: 2px; }
```
